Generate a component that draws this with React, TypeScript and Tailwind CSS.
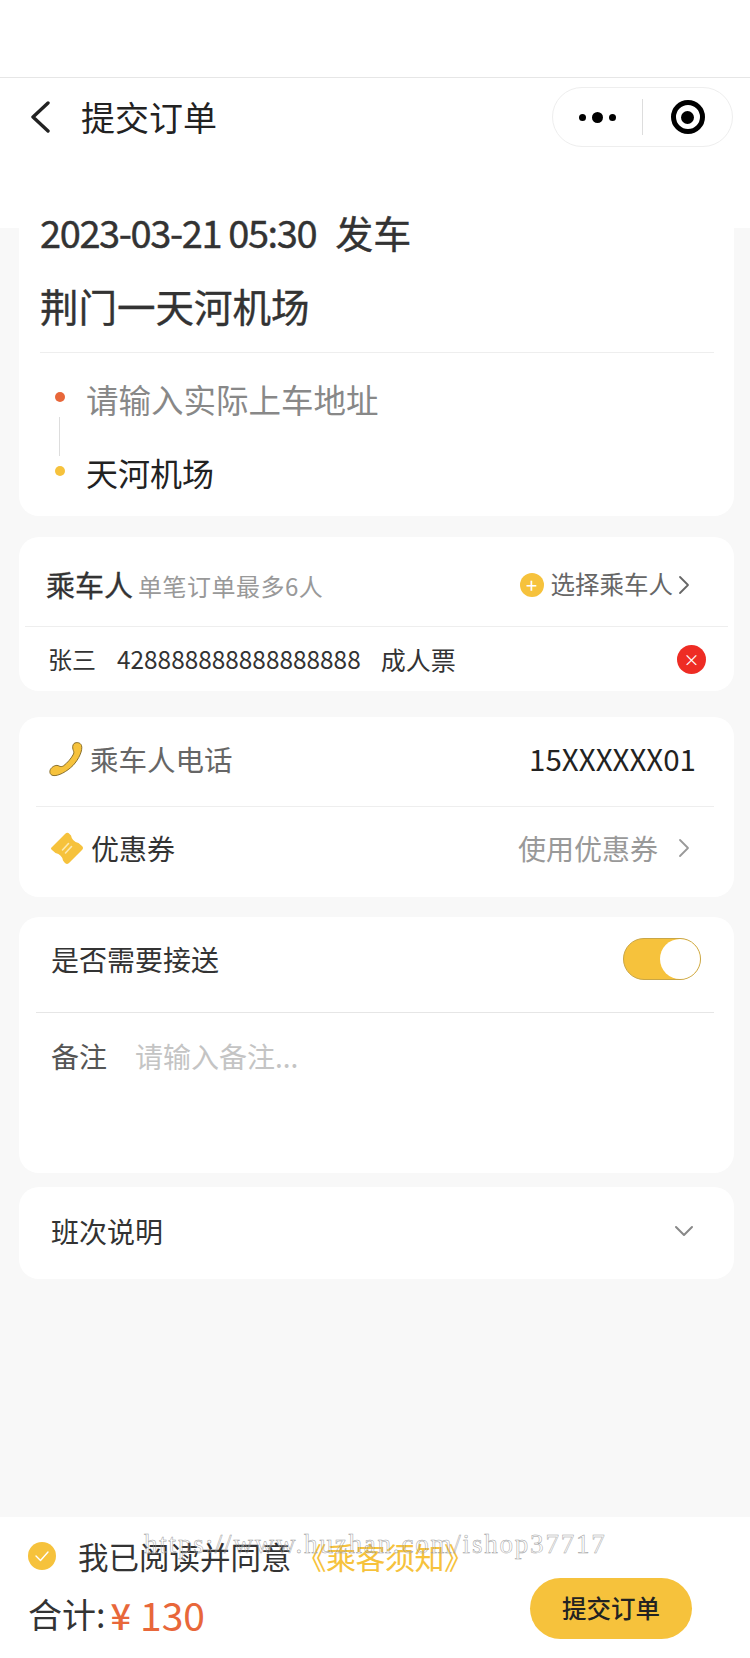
const font = { fontFamily: '"Noto Sans CJK SC", sans-serif' };

function Chevron({ className }: { className: string }) {
  return (
    <svg className={className} viewBox="0 0 12 20" fill="none" stroke="currentColor" strokeWidth="1.8" strokeLinecap="round" strokeLinejoin="round">
      <path d="M2 2l8 8-8 8" />
    </svg>
  );
}

function Phone() {
  return (
    <svg className="w-[36px] h-[36px] shrink-0" viewBox="0 0 36 36">
      <path
        d="M26 2.500C28.500.8 32.500 1.500 33.500 4.500C35 9 31 18 25 24.500C19 30.500 10 35.500 5 34.500C1.500 33.800 1 30 3 27.500C5 25 8.500 23.500 11 25C12.500 25.800 14 25.800 15.500 24.800C19.500 21.800 23.500 17 25.500 13C26.300 11.300 25.500 10 25 8.500C24.400 6.500 24.500 4 26 2.500Z"
        fill="#f6c23c"
        stroke="#7d6320"
        strokeWidth="0.9"
      />
    </svg>
  );
}

function Ticket() {
  return (
    <svg className="w-[34px] h-[34px] shrink-0" viewBox="0 0 34 34">
      <path
        d="M2 16L15 3Q17.500.5 19.500 3L21 4.500Q22 10.500 28.500 12L32 15Q34 17 32 19L19 32Q16.500 34 14.500 31.500L13 29.500Q12 23.500 5.500 22L2 19Q0 17.500 2 16Z"
        fill="#f6c23c"
      />
      <path d="M12.500 19l6-6.500M15.500 22l6-6.500" stroke="#fde9b0" strokeWidth="1.600" strokeLinecap="round" />
    </svg>
  );
}

export default function App() {
  return (
    <div className="relative w-[750px] h-[1658px] bg-[#f8f8f8] flex flex-col overflow-hidden" style={font}>
      <header className="h-[228px] shrink-0 bg-white">
        <div className="h-[78px] border-b border-[#e6e6e6]" />
        <div className="h-[78px] flex items-center pl-[30px] pr-[17px]">
          <svg className="w-[22px] h-[32px] text-[#222]" viewBox="0 0 22 32" fill="none" stroke="currentColor" strokeWidth="3.400" strokeLinecap="round" strokeLinejoin="round">
            <path d="M18 2L3 16l15 14" />
          </svg>
          <span className="ml-[29px] text-[34px] leading-none text-[#222]">提交订单</span>
          <div className="ml-auto w-[181px] h-[60px] rounded-full border border-[#eeeeee] flex items-center">
            <div className="w-[89px] flex items-center justify-center gap-[6px]">
              <span className="w-[7px] h-[7px] rounded-full bg-black" />
              <span className="w-[11px] h-[11px] rounded-full bg-black" />
              <span className="w-[7px] h-[7px] rounded-full bg-black" />
            </div>
            <div className="w-px h-[36px] bg-[#dddddd]" />
            <div className="flex-1 flex items-center justify-center">
              <span className="w-[34px] h-[34px] rounded-full border-[5px] border-black flex items-center justify-center">
                <span className="w-[13px] h-[13px] rounded-full bg-black" />
              </span>
            </div>
          </div>
        </div>
      </header>

      <main className="flex flex-col pl-[19px] pr-[16px] -mt-[28px]">
        <section className="h-[316px] bg-white rounded-[20px] pl-[21px] pr-[20px]">
          <div className="h-[64px] flex items-center text-[38px] text-[#333] leading-none [-webkit-text-stroke:0.4px_#333]">
            <span className="tracking-[-1.400px]">2023-03-21 05:30</span>
            <span className="ml-[19px]">发车</span>
          </div>
          <div className="h-[82px] flex items-center text-[38.500px] leading-none text-[#333] [-webkit-text-stroke:0.4px_#333]">荆门一天河机场</div>
          <div className="mt-[6px] border-t border-[#eeeeee] flex">
            <div className="w-[25px] flex flex-col pl-[15px] pt-[39px]">
              <span className="w-[10px] h-[10px] rounded-full bg-[#e8673a]" />
              <span className="ml-[4px] w-px h-[39px] bg-[#dddddd] mt-[15px]" />
              <span className="w-[10px] h-[10px] rounded-full bg-[#f6c23c] mt-[10px]" />
            </div>
            <div className="pt-[10px] ml-[21px]">
              <div className="h-[72px] flex items-center text-[32.500px] leading-none text-[#888]">请输入实际上车地址</div>
              <div className="h-[73px] flex items-center text-[32px] leading-none text-[#222]">天河机场</div>
            </div>
          </div>
        </section>

        <section className="mt-[21px] h-[154px] bg-white rounded-[20px]">
          <div className="h-[90px] mx-[6px] border-b border-[#eeeeee] flex items-center pl-[21px] pr-[38px] pt-[6px]">
            <span className="text-[29px] leading-none text-[#333] [-webkit-text-stroke:0.3px_#333]">乘车人</span>
            <span className="ml-[5px] mt-[3px] text-[24px] leading-none text-[#999] tracking-[0.500px]">单笔订单最多6人</span>
            <span className="ml-auto w-[24px] h-[24px] rounded-full bg-[#f6c23c] flex items-center justify-center text-white text-[20px] leading-none">+</span>
            <span className="ml-[7px] text-[24.500px] leading-none text-[#666]">选择乘车人</span>
            <Chevron className="ml-[5px] w-[12px] h-[20px] text-[#666]" />
          </div>
          <div className="h-[64px] flex items-center pl-[29px] pr-[28px] text-[24px] leading-none text-[#333]">
            <span>张三</span>
            <span className="ml-[21px] text-[24.400px]">428888888888888888</span>
            <span className="ml-[20px] text-[25px]">成人票</span>
            <span className="ml-auto w-[29px] h-[29px] rounded-full bg-[#ee2c24] flex items-center justify-center text-white text-[16px] leading-none">×</span>
          </div>
        </section>

        <section className="mt-[26px] h-[180px] bg-white rounded-[20px] pl-[17px] pr-[20px]">
          <div className="h-[90px] border-b border-[#eeeeee] flex items-center pl-[12px] pr-[18px] pb-[5px]">
            <Phone />
            <span className="ml-[6px] text-[28.500px] leading-none text-[#666]">乘车人电话</span>
            <span className="ml-auto text-[29.500px] leading-none text-[#222]">15XXXXXX01</span>
          </div>
          <div className="h-[89px] flex items-center pl-[14px] pr-[24px] pb-[8px]">
            <Ticket />
            <span className="ml-[7px] text-[28px] leading-none text-[#333]">优惠券</span>
            <span className="ml-auto text-[28px] leading-none text-[#999]">使用优惠券</span>
            <Chevron className="ml-[20px] w-[12px] h-[20px] text-[#999]" />
          </div>
        </section>

        <section className="mt-[20px] h-[256px] bg-white rounded-[20px] pl-[17px] pr-[20px]">
          <div className="h-[96px] border-b border-[#e6e6e6] flex items-center pl-[15px] pr-[13px] pb-[12px]">
            <span className="text-[28px] leading-none text-[#333]">是否需要接送</span>
            <div className="ml-auto w-[78px] h-[42px] rounded-full bg-[#f6c23c] border border-[#c9a646] flex items-center justify-end">
              <span className="w-[40px] h-[40px] rounded-full bg-white" />
            </div>
          </div>
          <div className="flex items-center pl-[15px] pt-[29px] text-[28px] leading-none">
            <span className="text-[#555]">备注</span>
            <span className="ml-[28px] text-[#c4c4c4]">请输入备注...</span>
          </div>
        </section>

        <section className="mt-[14px] h-[92px] bg-white rounded-[20px] flex items-center pl-[32px] pr-[40px] pb-[4px]">
          <span className="text-[28px] leading-none text-[#333]">班次说明</span>
          <svg className="ml-auto w-[20px] h-[12px] text-[#888]" viewBox="0 0 20 12" fill="none" stroke="currentColor" strokeWidth="2" strokeLinecap="round" strokeLinejoin="round">
            <path d="M2 2l8 8 8-8" />
          </svg>
        </section>
      </main>

      <footer className="mt-auto h-[141px] bg-white flex flex-col pl-[28px]">
        <div className="h-[78px] flex items-center">
          <span className="w-[28px] h-[28px] rounded-full bg-[#f6c23c] flex items-center justify-center">
            <svg className="w-[16px] h-[12px]" viewBox="0 0 16 12" fill="none" stroke="white" strokeWidth="1.400" strokeLinecap="round" strokeLinejoin="round">
              <path d="M2 6l4.500 4.500L14 2" />
            </svg>
          </span>
          <span className="ml-[22px] text-[30.500px] leading-none text-[#333]">我已阅读并同意</span>
          <span className="ml-[5px] text-[30px] leading-none text-[#f6c23c] -tracking-[0.500px]">《乘客须知》</span>
        </div>
        <div className="flex items-start">
          <div className="flex items-center h-[46px] -mt-[4px]">
            <span className="text-[34px] leading-none text-[#333]">合计:</span>
            <span className="ml-[5px] text-[36px] leading-none text-[#e8673a] font-medium">¥</span>
            <span className="ml-[9px] text-[39px] leading-none text-[#e8673a]">130</span>
          </div>
          <button className="ml-[auto] mr-[58px] -mt-[17px] w-[162px] h-[61px] rounded-full bg-[#f6c23c] text-[24.500px] leading-none text-[#222] font-medium">提交订单</button>
        </div>
      </footer>

      <div className="absolute left-[144px] top-[1526px] text-[27px] leading-[36px] whitespace-nowrap text-transparent tracking-[1.800px] [-webkit-text-stroke:0.5px_#a0a0a0]" style={{ fontFamily: '"Liberation Serif", serif' }}>
        https://www.huzhan.com/ishop37717
      </div>
    </div>
  );
}
